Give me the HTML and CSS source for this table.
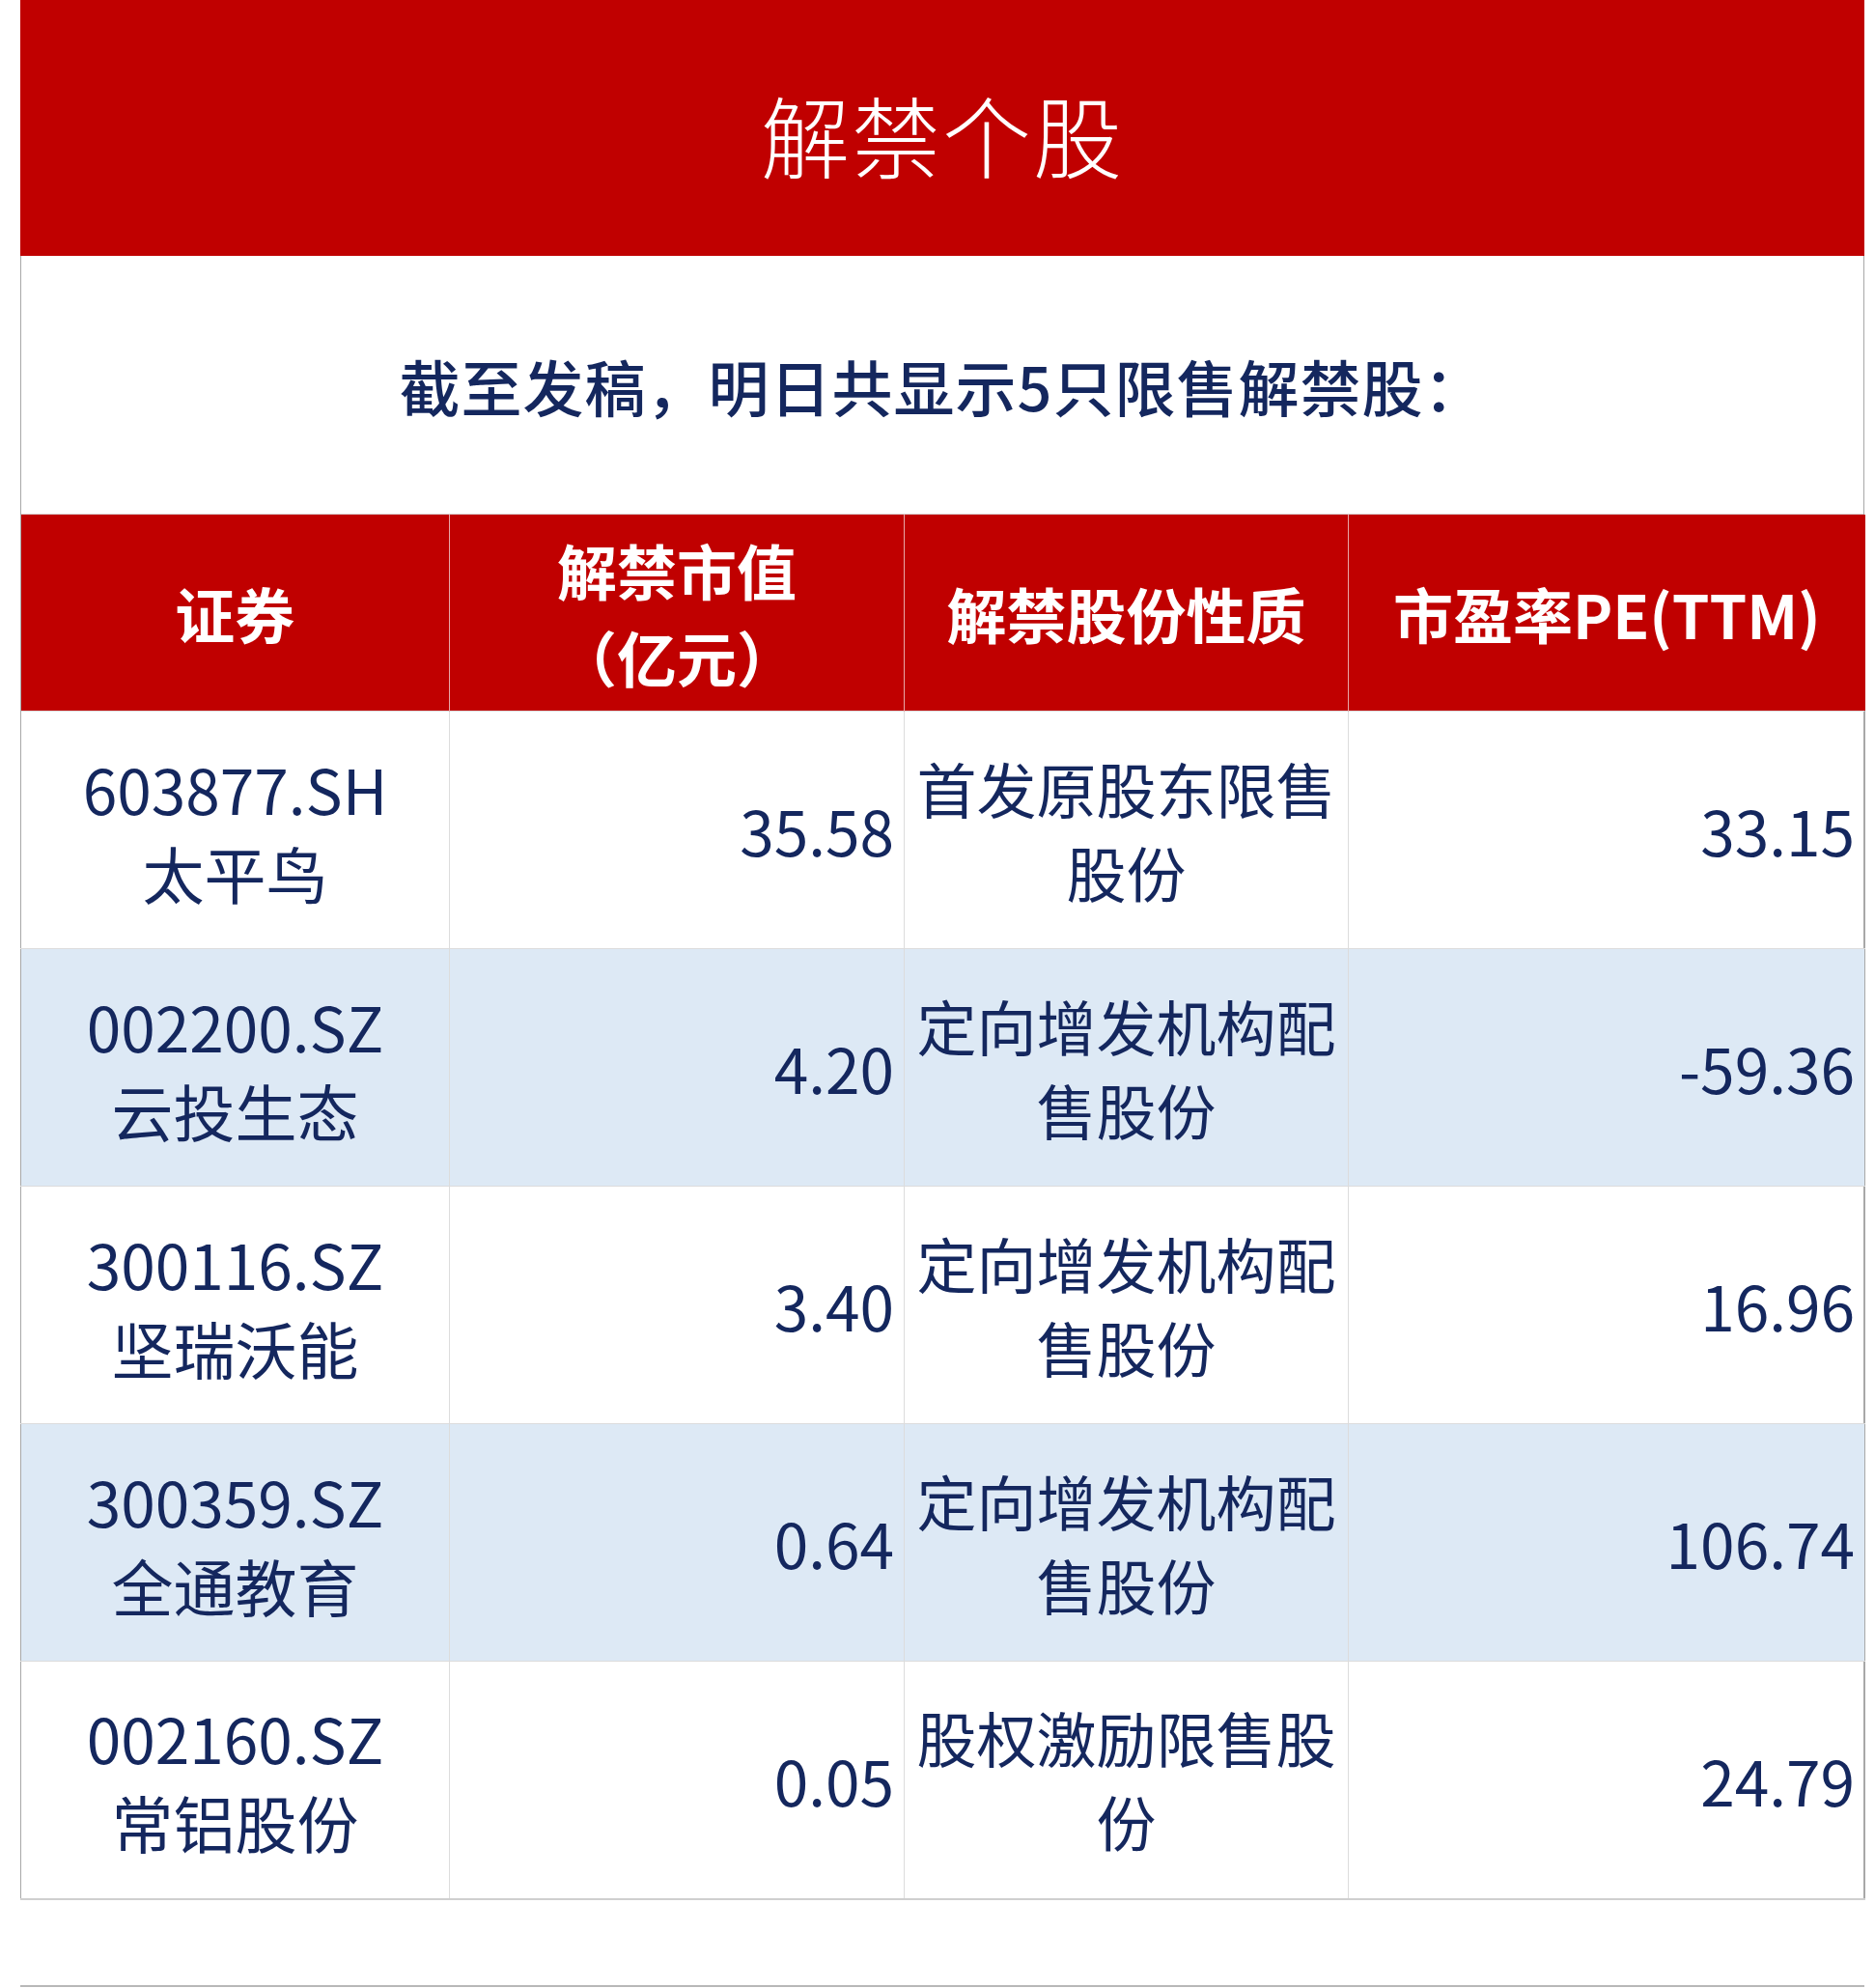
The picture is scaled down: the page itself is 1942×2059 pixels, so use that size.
FILE: index.html
```html
<!DOCTYPE html>
<html lang="zh-CN">
<head>
<meta charset="utf-8">
<title>解禁个股</title>
<link rel="stylesheet" href="styles.css">
</head>
<body>
<div class="card">
  <div class="title">解禁个股</div>
  <div class="subtitle">截至发稿，明日共显示5只限售解禁股：</div>
  <table class="stocks">
    <colgroup>
      <col class="c1"><col class="c2"><col class="c3"><col class="c4">
    </colgroup>
    <thead>
      <tr>
        <th>证券</th>
        <th>解禁市值<br>（亿元）</th>
        <th>解禁股份性质</th>
        <th>市盈率PE(TTM)</th>
      </tr>
    </thead>
    <tbody>
      <tr>
        <td class="name">603877.SH<br>太平鸟</td>
        <td class="num">35.58</td>
        <td class="kind">首发原股东限售股份</td>
        <td class="num">33.15</td>
      </tr>
      <tr class="alt">
        <td class="name">002200.SZ<br>云投生态</td>
        <td class="num">4.20</td>
        <td class="kind">定向增发机构配售股份</td>
        <td class="num">-59.36</td>
      </tr>
      <tr>
        <td class="name">300116.SZ<br>坚瑞沃能</td>
        <td class="num">3.40</td>
        <td class="kind">定向增发机构配售股份</td>
        <td class="num">16.96</td>
      </tr>
      <tr class="alt">
        <td class="name">300359.SZ<br>全通教育</td>
        <td class="num">0.64</td>
        <td class="kind">定向增发机构配售股份</td>
        <td class="num">106.74</td>
      </tr>
      <tr>
        <td class="name">002160.SZ<br>常铝股份</td>
        <td class="num">0.05</td>
        <td class="kind">股权激励限售股份</td>
        <td class="num">24.79</td>
      </tr>
    </tbody>
  </table>
</div>
<div class="footer-space"></div>
</body>
</html>
```
FILE: styles.css
```css
html, body {
  margin: 0;
  padding: 0;
  background: #ffffff;
}
body {
  font-family: "Noto Sans CJK SC", "Noto Sans", sans-serif;
  color: #14275e;
}
.card {
  margin-left: 21px;
  width: 1908px;
  border-left: 1px solid #a8a8a8;
  border-right: 1px solid #a8a8a8;
}
.title {
  height: 265px;
  background: #c00000;
  color: #ffffff;
  font-size: 92px;
  font-weight: 300;
  display: flex;
  align-items: center;
  justify-content: center;
  padding-top: 10px;
  box-sizing: border-box;
  letter-spacing: 2px;
  margin: 0 -1px;
}
.subtitle {
  height: 268px;
  display: flex;
  align-items: center;
  justify-content: center;
  font-size: 63px;
  font-weight: 500;
  color: #14275e;
  border-bottom: 1px solid #d8cccc;
  box-sizing: border-box;
  padding-top: 0;
  letter-spacing: 1px;
}
.stocks {
  width: 1910px;
  margin: 0 -1px;
  border-collapse: collapse;
  table-layout: fixed;
}
.c1 { width: 444px; }
.c2 { width: 471px; }
.c3 { width: 460px; }
.c4 { width: 535px; }
.stocks th {
  height: 203px;
  background: #c00000;
  color: #ffffff;
  font-size: 62px;
  font-weight: 700;
  line-height: 90px;
  padding: 0 4px;
  border-left: 1px solid #e8a8a8;
  text-align: center;
  vertical-align: middle;
  white-space: nowrap;
}
.stocks th:first-child {
  border-left: none;
}
.stocks td {
  height: 246px;
  box-sizing: border-box;
  font-size: 62px;
  line-height: 87px;
  font-weight: 400;
  color: #14275e;
  vertical-align: middle;
  border: 1px solid #dcdcdc;
  padding: 0 10px;
}
.stocks tbody tr:last-child td {
  border-bottom: 2px solid #cfcfcf;
}
.stocks tbody td:first-child {
  border-left: 1px solid #a8a8a8;
}
.stocks tbody td:last-child {
  border-right: 1px solid #a8a8a8;
}
.stocks tr.alt td {
  background: #dde9f5;
}
.name {
  text-align: center;
}
.stocks td.name,
.stocks td.num {
  font-size: 64px;
}
.num {
  text-align: right;
}
.kind {
  text-align: center;
}
.footer-space {
  height: 88px;
  margin-left: 21px;
  width: 1910px;
  border-bottom: 2px solid #b8b8b8;
}
```
